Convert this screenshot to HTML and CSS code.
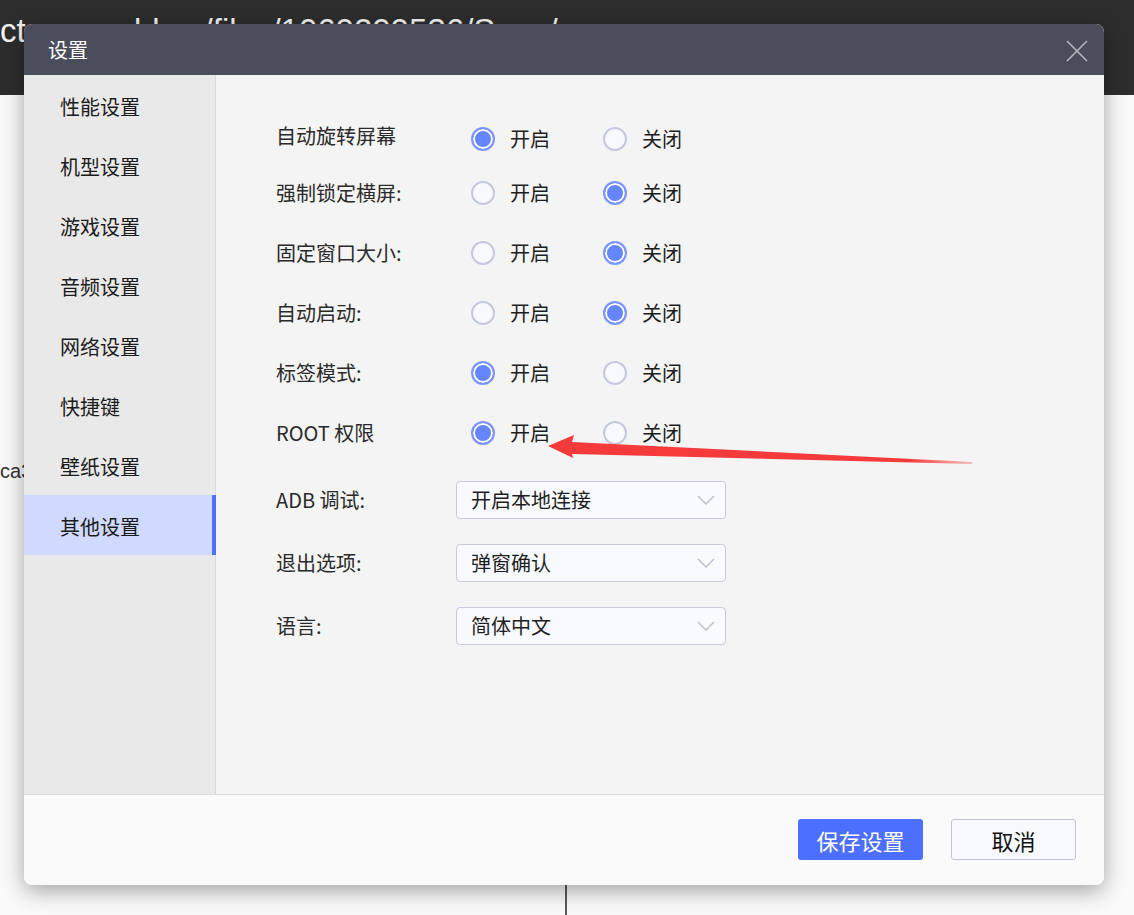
FILE: index.html
```html
<!DOCTYPE html>
<html lang="zh-CN">
<head>
<meta charset="utf-8">
<title>设置</title>
<link rel="stylesheet" href="styles.css">
</head>
<body>
<div class="page">
  <div class="bg-top"><span class="bg-url">ctgames.bbcc/files/1069299536/Save/</span></div>
  <div class="bg-main">
    <div class="bg-left"><div class="bg-text">ca3f9e21</div></div>
    <div class="bg-right"></div>
  </div>
</div>

<div class="dialog">
  <div class="dlg-head">
    <span class="dlg-title">设置</span>
    <svg class="dlg-close" width="22" height="22" viewBox="0 0 22 22"><path d="M1 1 L21 21 M21 1 L1 21" stroke="#b4b6bd" stroke-width="1.6" fill="none"/></svg>
  </div>
  <div class="dlg-body">
    <nav class="side">
      <div class="side-item">性能设置</div>
      <div class="side-item">机型设置</div>
      <div class="side-item">游戏设置</div>
      <div class="side-item">音频设置</div>
      <div class="side-item">网络设置</div>
      <div class="side-item">快捷键</div>
      <div class="side-item">壁纸设置</div>
      <div class="side-item active">其他设置</div>
    </nav>
    <div class="content">
      <div class="row row-first">
        <div class="label">自动旋转屏幕</div>
        <div class="opts"><div class="opt"><span class="radio on"></span>开启</div><div class="opt"><span class="radio"></span>关闭</div></div>
      </div>
      <div class="row">
        <div class="label">强制锁定横屏:</div>
        <div class="opts"><div class="opt"><span class="radio"></span>开启</div><div class="opt"><span class="radio on"></span>关闭</div></div>
      </div>
      <div class="row">
        <div class="label">固定窗口大小:</div>
        <div class="opts"><div class="opt"><span class="radio"></span>开启</div><div class="opt"><span class="radio on"></span>关闭</div></div>
      </div>
      <div class="row">
        <div class="label">自动启动:</div>
        <div class="opts"><div class="opt"><span class="radio"></span>开启</div><div class="opt"><span class="radio on"></span>关闭</div></div>
      </div>
      <div class="row">
        <div class="label">标签模式:</div>
        <div class="opts"><div class="opt"><span class="radio on"></span>开启</div><div class="opt"><span class="radio"></span>关闭</div></div>
      </div>
      <div class="row">
        <div class="label">ROOT 权限</div>
        <div class="opts"><div class="opt"><span class="radio on"></span>开启</div><div class="opt"><span class="radio"></span>关闭</div></div>
      </div>
      <div class="sel-row first-sel">
        <div class="label sel-label">ADB 调试:</div>
        <div class="select">开启本地连接<svg class="chev" width="18" height="10" viewBox="0 0 18 10"><path d="M1 1 L9 9 L17 1" stroke="#b9bdcc" stroke-width="1.4" fill="none"/></svg></div>
      </div>
      <div class="sel-row">
        <div class="label sel-label">退出选项:</div>
        <div class="select">弹窗确认<svg class="chev" width="18" height="10" viewBox="0 0 18 10"><path d="M1 1 L9 9 L17 1" stroke="#b9bdcc" stroke-width="1.4" fill="none"/></svg></div>
      </div>
      <div class="sel-row">
        <div class="label sel-label">语言:</div>
        <div class="select">简体中文<svg class="chev" width="18" height="10" viewBox="0 0 18 10"><path d="M1 1 L9 9 L17 1" stroke="#b9bdcc" stroke-width="1.4" fill="none"/></svg></div>
      </div>
    </div>
  </div>
  <div class="dlg-foot">
    <button class="btn btn-primary">保存设置</button>
    <button class="btn btn-default">取消</button>
  </div>
</div>

<svg class="arrow" width="1134" height="915" viewBox="0 0 1134 915">
  <defs>
    <linearGradient id="fade" x1="548" y1="0" x2="972" y2="0" gradientUnits="userSpaceOnUse">
      <stop offset="0" stop-color="#f43a3a"/>
      <stop offset="0.85" stop-color="#f43a3a"/>
      <stop offset="1" stop-color="#f43a3a" stop-opacity="0.3"/>
    </linearGradient>
  </defs>
  <polygon points="548,446 574,435 572,442 972,462 972,464 572,454 573,458" fill="url(#fade)"/>
</svg>
</body>
</html>
```
FILE: styles.css
```css
html, body {
  margin: 0;
  padding: 0;
}
body {
  width: 1134px;
  height: 915px;
  overflow: hidden;
  background: #fafafa;
  font-family: "Noto Sans CJK SC", "Liberation Sans", sans-serif;
  position: relative;
}

/* underlying page */
.page {
  display: flex;
  flex-direction: column;
  height: 915px;
}
.bg-top {
  height: 95px;
  background: #2d2d2d;
  overflow: hidden;
}
.bg-url {
  display: block;
  font-family: "Liberation Sans", Arial, sans-serif;
  font-size: 33px;
  line-height: 33px;
  color: #f2f2f2;
  padding-top: 14px;
  white-space: nowrap;
}
.bg-main {
  flex: 1;
  display: flex;
}
.bg-left {
  width: 565px;
  border-right: 2px solid #5b5b5b;
  background: #fafafa;
}
.bg-right {
  flex: 1;
  background: #fafafa;
}
.bg-text {
  margin-top: 364px;
  font-family: "Liberation Sans", Arial, sans-serif;
  font-size: 20px;
  line-height: 24px;
  color: #333;
  white-space: nowrap;
}

/* dialog */
.dialog {
  position: absolute;
  left: 24px;
  top: 24px;
  width: 1080px;
  height: 861px;
  border-radius: 8px;
  overflow: hidden;
  box-shadow: 0 6px 22px rgba(0, 0, 0, 0.35);
  display: flex;
  flex-direction: column;
  background: #fafafa;
}
.dlg-head {
  height: 51px;
  background: #4a4e5c;
  display: flex;
  align-items: center;
  justify-content: space-between;
  padding: 0 16px 0 24px;
  flex-shrink: 0;
}
.dlg-title {
  color: #ffffff;
  font-size: 20px;
  line-height: 1;
}
.dlg-close {
  display: block;
  margin-top: 2px;
}
.dlg-body {
  height: 719px;
  display: flex;
  border-bottom: 1px solid #dadada;
  flex-shrink: 0;
}
.side {
  width: 191px;
  background: #e9e9e9;
  border-right: 1px solid #d9d9d9;
}
.side-item {
  height: 60px;
  display: flex;
  align-items: center;
  padding: 3px 0 0 36px;
  font-size: 20px;
  line-height: 1;
  color: #1b1b1b;
  box-sizing: border-box;
}
.side-item.active {
  background: #d0daff;
  border-right: 4px solid #4f6eff;
  margin-right: -1px;
}
.content {
  flex: 1;
  background: #f4f4f4;
  padding: 34px 0 0 60px;
}
.row {
  height: 60px;
  display: flex;
  align-items: center;
}
.row-first {
  height: 54px;
}
.row-first .opts {
  padding-top: 6px;
}
.label {
  width: 195px;
  font-size: 20px;
  line-height: 1;
  color: #2a2a2a;
}
.opts {
  display: flex;
}
.opt {
  width: 132px;
  display: flex;
  align-items: center;
  gap: 15px;
  font-size: 20px;
  line-height: 1;
  color: #1e1e1e;
}
.radio {
  width: 24px;
  height: 24px;
  box-sizing: border-box;
  border-radius: 50%;
  border: 2px solid #c5c8dc;
  background: #f8f9ff;
  flex-shrink: 0;
}
.radio.on {
  border-color: #7d96ff;
  background: #6686ff;
  box-shadow: inset 0 0 0 2px #ffffff;
}
.sel-row {
  display: flex;
  align-items: center;
  margin-top: 25px;
}
.sel-row.first-sel {
  margin-top: 18px;
}
.sel-label {
  width: 180px;
}
.select {
  width: 270px;
  height: 38px;
  box-sizing: border-box;
  border: 1px solid #c8cbda;
  border-radius: 4px;
  background: #f9faff;
  display: flex;
  align-items: center;
  justify-content: space-between;
  padding: 0 10px 0 14px;
  font-size: 20px;
  line-height: 1;
  color: #1e1e1e;
}
.chev {
  display: block;
}
.dlg-foot {
  flex: 1;
  display: flex;
  justify-content: flex-end;
  align-items: flex-start;
  gap: 28px;
  padding: 24px 28px 0 0;
  background: #fafafa;
}
.btn {
  width: 125px;
  height: 41px;
  box-sizing: border-box;
  border-radius: 3px;
  font-family: "Noto Sans CJK SC", "Liberation Sans", sans-serif;
  font-size: 22px;
  line-height: 1;
  padding: 0;
  cursor: pointer;
}
.btn-primary {
  background: #4d6fff;
  border: none;
  color: #ffffff;
}
.btn-default {
  background: #f8f9ff;
  border: 1px solid #c0c4d6;
  color: #111111;
}

.arrow {
  position: absolute;
  left: 0;
  top: 0;
  pointer-events: none;
}
```
